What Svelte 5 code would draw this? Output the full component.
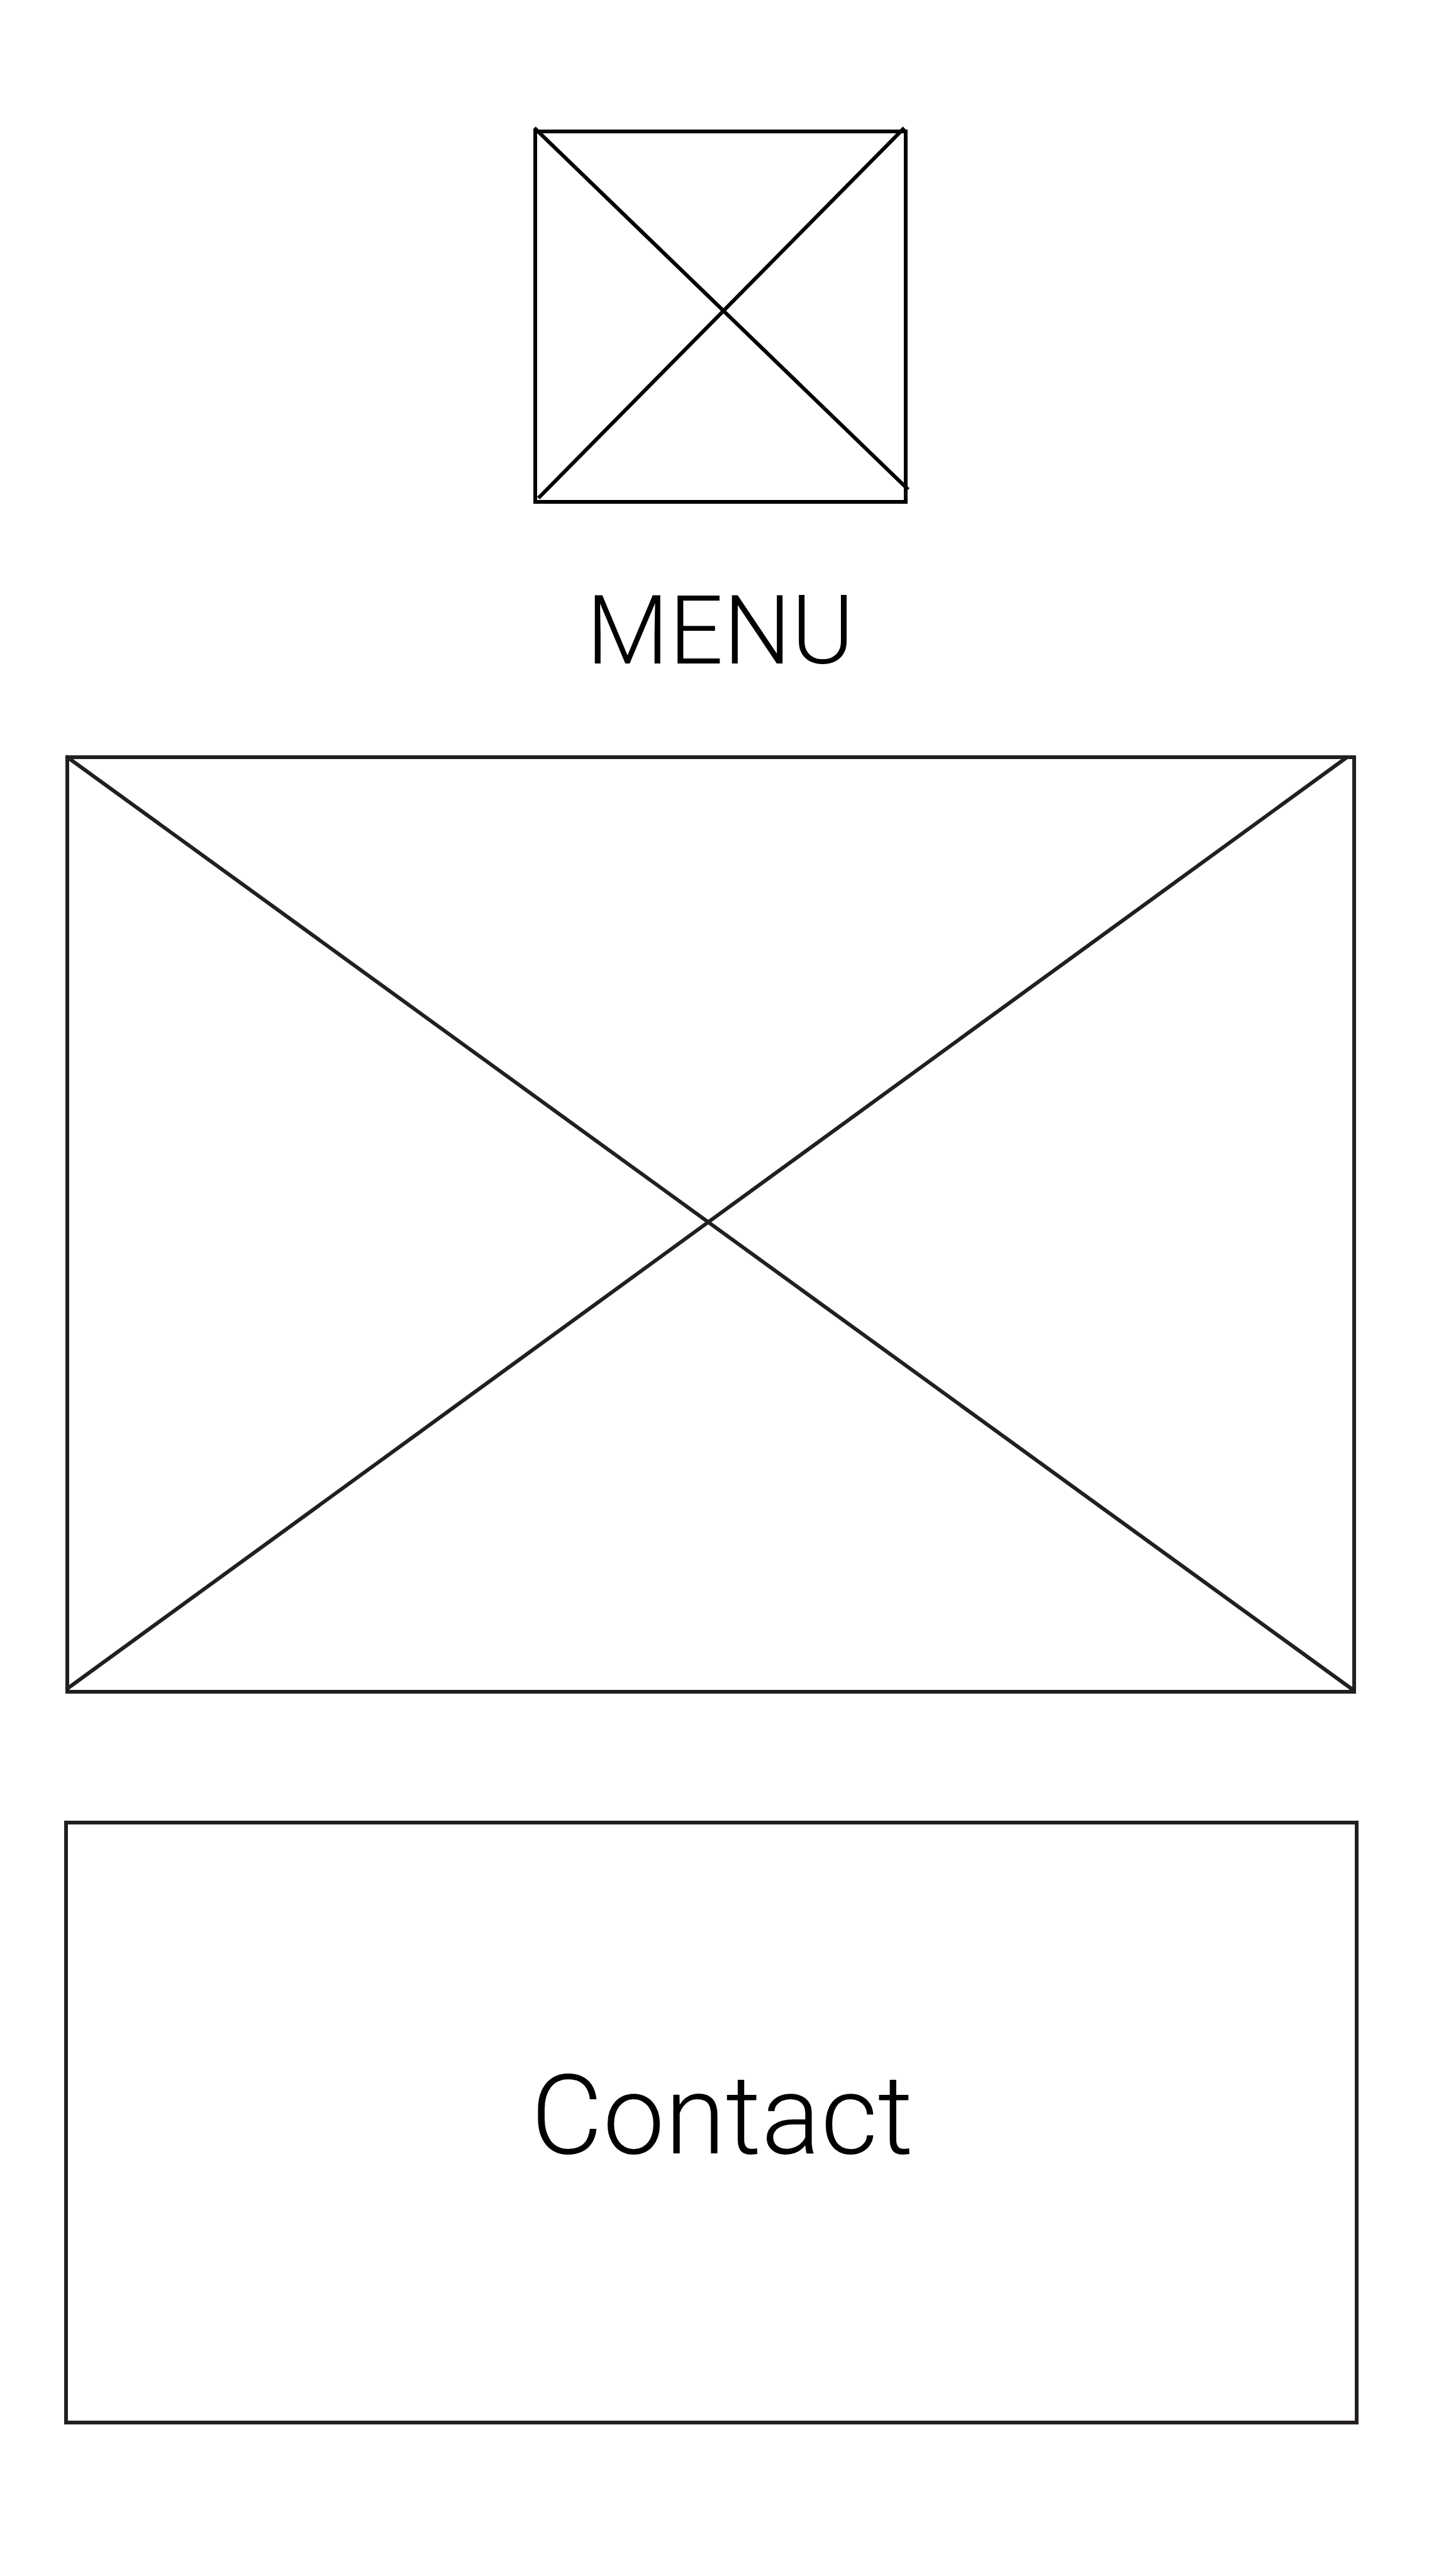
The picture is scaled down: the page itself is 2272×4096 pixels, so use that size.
<script>
  const logoLines = [
    [1.6, -2.7, 596, 572.4],
    [589.7, -2.7, 8, 586]
  ];
  const heroLines = [
    [1, 1.5, 2050, 1488],
    [1, 1485.5, 2039, 2]
  ];
</script>

<div class="page">
  <header>
    <svg class="logo" viewBox="0 0 595 595" role="img" aria-label="Logo placeholder">
      <rect x="3" y="3" width="589" height="589" />
      {#each logoLines as [x1, y1, x2, y2]}
        <line {x1} {y1} {x2} {y2} />
      {/each}
    </svg>
    <button class="menu" type="button">MENU</button>
  </header>

  <main>
    <svg class="hero" viewBox="0 0 2052 1492" role="img" aria-label="Image placeholder">
      <rect x="3" y="3" width="2046" height="1486" />
      {#each heroLines as [x1, y1, x2, y2]}
        <line {x1} {y1} {x2} {y2} />
      {/each}
    </svg>
    <a class="contact" href="#contact">Contact</a>
  </main>
</div>

<style>
  :global(body) {
    background: #fff;
  }

  .page {
    box-sizing: border-box;
    padding: 206px 112px 241px 102px;
    font-family: Roboto, "Liberation Sans", sans-serif;
    font-weight: 300;
    color: #000;
  }

  header {
    display: flex;
    flex-direction: column;
    align-items: center;
    gap: 126px;
    padding-left: 28px;
    margin-bottom: 122px;
  }

  svg {
    display: block;
    overflow: visible;
    fill: none;
    stroke-width: 6px;
  }

  .logo {
    width: 100%;
    max-width: 595px;
    stroke: #000;
  }

  .menu {
    padding: 0;
    border: 0;
    background: none;
    color: inherit;
    font: inherit;
    font-size: 152px;
    line-height: 152px;
    cursor: pointer;
  }

  main {
    display: flex;
    flex-direction: column;
    gap: 202px;
  }

  .hero {
    margin: 0 4px 0 2px;
    stroke: #231f20;
  }

  .contact {
    box-sizing: border-box;
    display: flex;
    align-items: center;
    justify-content: center;
    min-height: 960px;
    padding: 0 0 22px 34px;
    border: 6px solid #231f20;
    color: inherit;
    font-size: 176px;
    line-height: 176px;
    text-decoration: none;
  }
</style>
